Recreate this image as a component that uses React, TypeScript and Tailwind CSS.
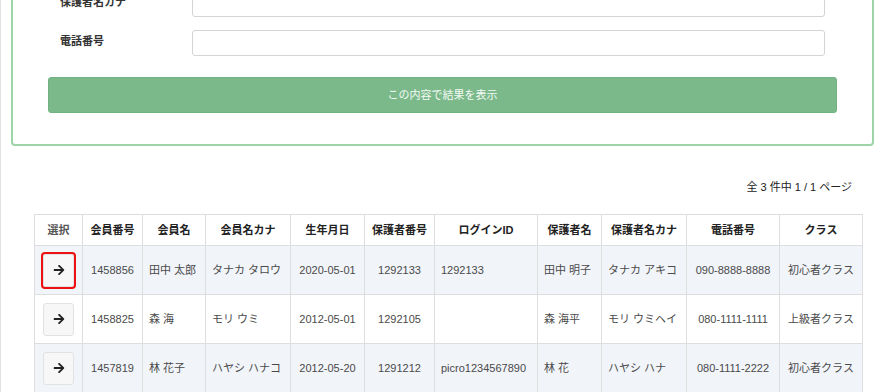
import React from 'react';
import { FaArrowRight } from 'react-icons/fa';

type Member = {
  id: string;
  name: string;
  kana: string;
  birth: string;
  guardianNo: string;
  login: string;
  guardian: string;
  guardianKana: string;
  tel: string;
  klass: string;
};

const members: Member[] = [
  { id: '1458856', name: '田中 太郎', kana: 'タナカ タロウ', birth: '2020-05-01', guardianNo: '1292133', login: '1292133', guardian: '田中 明子', guardianKana: 'タナカ アキコ', tel: '090-8888-8888', klass: '初心者クラス' },
  { id: '1458825', name: '森 海', kana: 'モリ ウミ', birth: '2012-05-01', guardianNo: '1292105', login: '', guardian: '森 海平', guardianKana: 'モリ ウミヘイ', tel: '080-1111-1111', klass: '上級者クラス' },
  { id: '1457819', name: '林 花子', kana: 'ハヤシ ハナコ', birth: '2012-05-20', guardianNo: '1291212', login: 'picro1234567890', guardian: '林 花', guardianKana: 'ハヤシ ハナ', tel: '080-1111-2222', klass: '初心者クラス' },
];

const headers = ['選択', '会員番号', '会員名', '会員名カナ', '生年月日', '保護者番号', 'ログインID', '保護者名', '保護者名カナ', '電話番号', 'クラス'];
const widths = [48, 60, 63, 85, 74, 70, 103, 64, 85, 93, 83];

const cell = 'whitespace-nowrap border border-[#dedede]';

function FormRow({ label }: { label: string }) {
  return (
    <div className="flex items-start px-3">
      <label className="w-[132px] pt-[3px] text-[11px] font-bold leading-[16px] text-[#333]">{label}</label>
      <input type="text" className="h-[26px] flex-1 rounded-[3px] border border-[#d4d4d4] bg-white px-2 text-[11px] outline-none" />
    </div>
  );
}

export default function App() {
  return (
    <div
      className="h-[392px] overflow-hidden border-l border-[#e2e2e2] bg-white pl-[10px] pr-[9px]"
      style={{ fontFamily: '"Liberation Sans", "Noto Sans CJK JP", sans-serif' }}
    >
      {/* search form */}
      <div className="-mt-[40px] rounded-[4px] border-2 border-[color:#9dd4a8] px-[35px] pt-[29px] pb-[31px]">
        <div className="flex flex-col gap-[13px]">
          <FormRow label="保護者名カナ" />
          <FormRow label="電話番号" />
        </div>
        <button
          type="button"
          className="mt-[21px] h-[36px] w-full rounded-[3px] border border-[#72b282] bg-[#7bb88a] text-[11px] text-[#f2faf4]"
        >
          この内容で結果を表示
        </button>
      </div>

      <div className="mt-[34px] pr-[22px] text-right text-[11px] leading-[14px] text-[#222]">全 3 件中 1 / 1 ページ</div>

      {/* result table */}
      <div className="mt-[20px] pl-[23px]">
        <table className="table-fixed border-collapse text-[11px]">
          <colgroup>
            {widths.map((w, i) => (
              <col key={i} style={{ width: w }} />
            ))}
          </colgroup>
          <thead>
            <tr className="h-[31px] bg-white">
              {headers.map((h, i) => (
                <th key={h} className={`${cell} px-0 text-center ${i === 0 ? 'font-semibold text-[#555]' : 'font-bold text-[#222]'}`}>
                  {h}
                </th>
              ))}
            </tr>
          </thead>
          <tbody className="text-[#4a4a4a]">
            {members.map((m, i) => (
              <tr key={m.id} className={`h-[49px] ${i % 2 === 0 ? 'bg-[#f1f4f9]' : 'bg-white'}`}>
                <td className={`${cell} text-center`}>
                  <button
                    type="button"
                    className={`inline-flex h-[33px] w-[31px] items-center justify-center border border-[#e2e2e2] bg-[#f7f7f7] text-[#222] ${i === 0 ? 'rounded-[2px] outline-2 outline-[#ee1111]' : 'rounded-[3px]'}`}
                  >
                    <FaArrowRight className="h-[12px] w-[12px]" />
                  </button>
                </td>
                <td className={`${cell} text-center`}>{m.id}</td>
                <td className={`${cell} px-[6px]`}>{m.name}</td>
                <td className={`${cell} px-[6px]`}>{m.kana}</td>
                <td className={`${cell} text-center`}>{m.birth}</td>
                <td className={`${cell} text-center`}>{m.guardianNo}</td>
                <td className={`${cell} px-[6px]`}>{m.login}</td>
                <td className={`${cell} px-[6px]`}>{m.guardian}</td>
                <td className={`${cell} px-[6px]`}>{m.guardianKana}</td>
                <td className={`${cell} text-center`}>{m.tel}</td>
                <td className={`${cell} text-center`}>{m.klass}</td>
              </tr>
            ))}
          </tbody>
        </table>
      </div>
    </div>
  );
}
